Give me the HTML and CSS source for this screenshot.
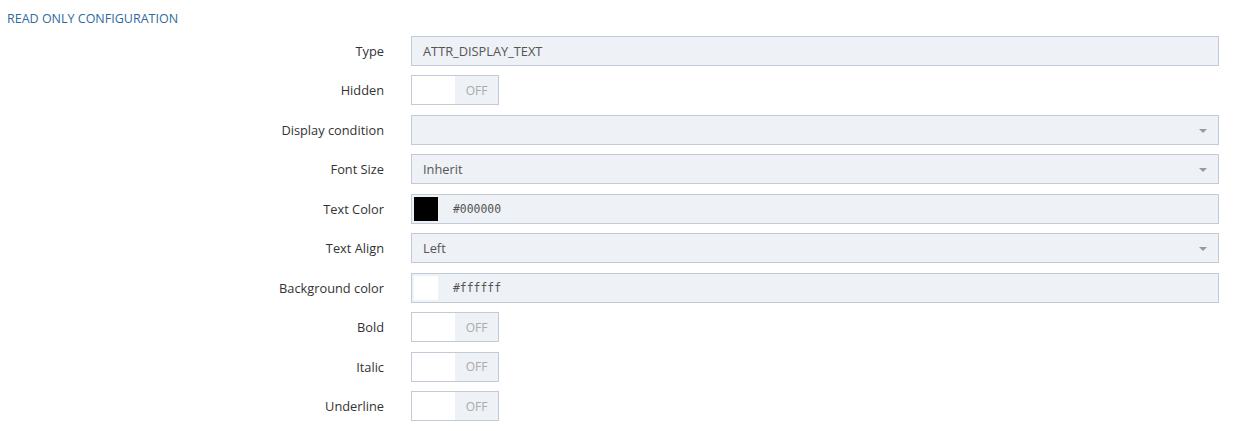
FILE: index.html
```html
<!DOCTYPE html>
<html lang="en">
<head>
    <meta charset="UTF-8">
    <title>Read only configuration</title>
    <link rel="stylesheet" href="styles.css">
</head>
<body>
    <div class="section-title">READ ONLY CONFIGURATION</div>

    <div class="config-form">
        <label class="field-label">Type</label>
        <div class="field-input">ATTR_DISPLAY_TEXT</div>

        <label class="field-label">Hidden</label>
        <div class="toggle"><span class="toggle-knob"></span><span class="toggle-off">OFF</span></div>

        <label class="field-label">Display condition</label>
        <div class="field-input field-select"></div>

        <label class="field-label">Font Size</label>
        <div class="field-input field-select">Inherit</div>

        <label class="field-label">Text Color</label>
        <div class="field-input field-color"><span class="swatch swatch-black"></span><span class="hex">#000000</span></div>

        <label class="field-label">Text Align</label>
        <div class="field-input field-select">Left</div>

        <label class="field-label">Background color</label>
        <div class="field-input field-color"><span class="swatch swatch-white"></span><span class="hex">#ffffff</span></div>

        <label class="field-label">Bold</label>
        <div class="toggle"><span class="toggle-knob"></span><span class="toggle-off">OFF</span></div>

        <label class="field-label">Italic</label>
        <div class="toggle"><span class="toggle-knob"></span><span class="toggle-off">OFF</span></div>

        <label class="field-label">Underline</label>
        <div class="toggle"><span class="toggle-knob"></span><span class="toggle-off">OFF</span></div>
    </div>
</body>
</html>
```
FILE: styles.css
```css
body {
    font-family: "Open Sans", Arial, sans-serif;
    font-size: 12.8px;
    color: #333;
    background: #fff;
    margin: 0;
    padding: 10px 0 0 7px;
}
.section-title {
    color: #2e6b9e;
    font-size: 12.5px;
    line-height: 18px;
}
.config-form {
    display: grid;
    grid-template-columns: 377px 808px;
    column-gap: 27px;
    row-gap: 9.5px;
    margin-top: 7.5px;
    align-items: center;
}
.field-label {
    text-align: right;
    color: #333;
}
.field-input {
    box-sizing: border-box;
    height: 30px;
    background: #eef1f5;
    border: 1px solid #c2cad8;
    padding: 0 11px;
    color: #555;
    display: flex;
    align-items: center;
}
.field-select {
    position: relative;
}
.field-select::after {
    content: "";
    position: absolute;
    right: 11px;
    top: 13px;
    border-left: 4px solid transparent;
    border-right: 4px solid transparent;
    border-top: 4px solid #999;
}
.field-color {
    padding-left: 2px;
}
.swatch {
    width: 24px;
    height: 24px;
    margin-right: 15px;
}
.swatch-black {
    background: #000;
}
.swatch-white {
    background: #fff;
}
.hex {
    font-family: "DejaVu Sans Mono", monospace;
    font-size: 11.4px;
    color: #555;
}
.toggle {
    box-sizing: border-box;
    width: 88px;
    height: 30px;
    border: 1px solid #c2cad8;
    display: flex;
}
.toggle-knob {
    width: 43px;
    background: #fff;
}
.toggle-off {
    flex: 1;
    background: #eef1f5;
    color: #aaa;
    font-size: 12px;
    display: flex;
    align-items: center;
    justify-content: center;
}
```
